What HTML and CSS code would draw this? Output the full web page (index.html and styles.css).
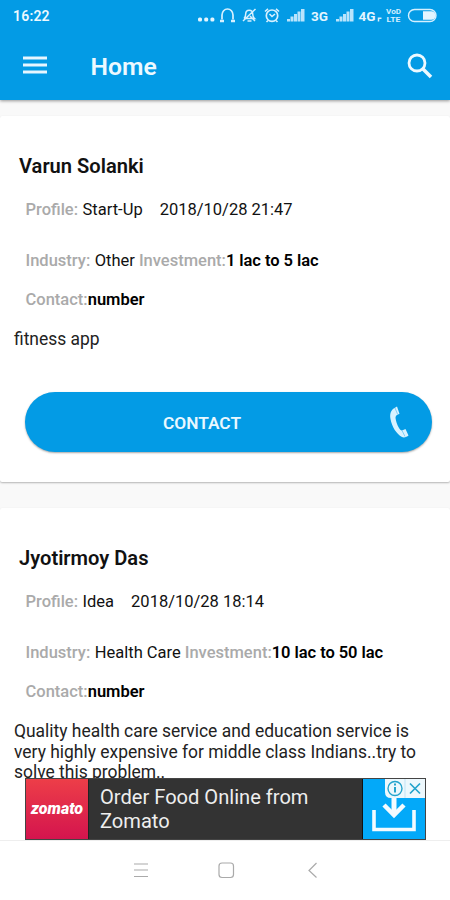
FILE: index.html
```html
<!DOCTYPE html>
<html lang="en">
<head>
<meta charset="utf-8">
<title>Home</title>
<link rel="stylesheet" href="styles.css">
</head>
<body>
<div class="screen">
  <header class="header">
    <div class="status">
      <span class="time">16:22</span>
      <svg class="status-icons" width="242" height="20" viewBox="0 0 242 20" fill="none" stroke="#d6f0ff" stroke-width="1.400">
        <g fill="#e3f5ff" stroke="none"><rect x="0" y="11.500" width="4" height="4" rx="1.500"/><rect x="6.200" y="11.500" width="4" height="4" rx="1.500"/><rect x="12.400" y="11.500" width="4" height="4" rx="1.500"/></g>
        <path d="M24 13.500V9a5.500 6 0 0 1 11 0v4.500" stroke-width="1.700"/><path d="M22 15h4M33 15h4" stroke-width="2.600"/>
        <path d="M46 12.500h10.500c-1.800-1.500-1.800-2.500-1.800-4.500 0-5-7-5-7 0 0 2 0 3-1.700 4.500M57.500 3L45 15M49.500 15h4M52 10l5 5" stroke-width="1.500"/>
        <circle cx="74" cy="9.700" r="5.700" stroke-width="1.700"/><path d="M67 5.500l3-2.700M78 2.800l3 2.700M71.500 8l2.500 2.500 3-2.500M70 14.500l-1.500 1.500M78 14.500l1.500 1.500" stroke-width="1.600"/>
        <g fill="#b9e4fc" stroke="none"><path d="M89 15.500v-2.500h3v2.500zM92.500 15.500v-5h3v5zM96 15.500V8h3v7.500zM99.500 15.500V5.500h3v10zM103 15.500V3h3.500v12.500z"/><path d="M138 15.500v-2.500h3v2.500zM141.500 15.500v-5h3v5zM145 15.500V8h3v7.500zM148.500 15.500V5.500h3v10zM152 15.500V3h3.500v12.500z"/></g>
        <g class="status-text"><text x="113" y="15" textLength="17" lengthAdjust="spacingAndGlyphs">3G</text><text x="160.500" y="15" textLength="17" lengthAdjust="spacingAndGlyphs">4G</text></g>
        <path d="M180.500 15.500v-4M180.500 12.300h3" stroke-width="1.500"/>
        <g class="status-small"><text x="188" y="7.500" textLength="15" lengthAdjust="spacingAndGlyphs">VoD</text><text x="188.500" y="16" textLength="14" lengthAdjust="spacingAndGlyphs">LTE</text></g>
        <rect x="210.500" y="3.500" width="27.500" height="12" rx="6"/><path d="M225 5.200h8.300a4.200 4.200 0 0 1 0 8.600H225z" fill="#e3f5ff" stroke="none"/>
      </svg>
    </div>
    <div class="toolbar">
      <svg class="menu" width="24" height="18" viewBox="0 0 24 18" stroke="#e6f6ff" stroke-width="3"><path d="M0 2h24M0 9h24M0 16h24"/></svg>
      <h1 class="title">Home</h1>
      <svg class="search" width="26" height="26" viewBox="0 0 26 26" fill="none" stroke="#edf9ff"><circle cx="10" cy="10" r="8" stroke-width="2.800"/><path d="M15.500 15.500l8.500 8.500" stroke-width="3.600"/></svg>
    </div>
  </header>

  <main class="feed">
    <article class="card">
      <h2 class="name">Varun Solanki</h2>
      <p class="row profile"><span class="label">Profile:</span><span class="value">Start-Up</span><span class="date">2018/10/28 21:47</span></p>
      <p class="row industry"><span class="label">Industry:</span><span class="value">Other</span><span class="label invest">Investment:</span><b>1 lac to 5 lac</b></p>
      <p class="row contact-row"><span class="label">Contact:</span><b>number</b></p>
      <p class="desc">fitness app</p>
      <button class="contact">CONTACT
        <svg class="phone" width="20" height="32" viewBox="0 0 20 32"><path d="M5.500 2C2 4 .5 7.500 1.500 13c1.500 8 6 15 11.500 18 2 1 5 0 6.500-1.500l-3-6.500-3.500 1.500c-1 .2-2-.8-3-2.500-2-3.500-3-6.500-3.500-10 0-1.500.5-2.500 1.500-3l2.500-1.200L8 .5z" fill="#d8f2ff"/><path d="M6 2l2.700 6.500M13 24.500l3 6" stroke="#61bff0" stroke-width=".7"/></svg>
      </button>
    </article>
    <article class="card">
      <h2 class="name">Jyotirmoy Das</h2>
      <p class="row profile"><span class="label">Profile:</span><span class="value">Idea</span><span class="date">2018/10/28 18:14</span></p>
      <p class="row industry"><span class="label">Industry:</span><span class="value">Health Care</span><span class="label invest">Investment:</span><b>10 lac to 50 lac</b></p>
      <p class="row contact-row"><span class="label">Contact:</span><b>number</b></p>
      <p class="desc">Quality health care service and education service is<br>very highly expensive for middle class Indians..try to<br>solve this problem..</p>
    </article>
  </main>

  <aside class="ad">
    <div class="brand">zomato</div>
    <div class="ad-text">Order Food Online from<br>Zomato</div>
    <div class="download">
      <svg width="62" height="60" viewBox="0 0 62 60" fill="none" stroke="#f4fbff"><path d="M11 31v19.500h40V31" stroke-width="3.600"/><path d="M31 17v18" stroke-width="5"/><path d="M21 26l10 10 10-10" stroke-width="4.500"/><path d="M22 0h40v19H28q-6 0-6-6z" fill="#edf8fd" stroke="none"/><g stroke="#24a3cc" stroke-width="1.400"><circle cx="32" cy="9.500" r="7"/><path d="M32 8v5.500M32 4.500v2" stroke-width="2"/><path d="M47 4.500l10 10M57 4.500l-10 10" stroke-width="1.700"/></g><path d="M42 0v19" stroke="#c1e3f5" stroke-width="1"/></svg>
    </div>
  </aside>
  <nav class="nav">
    <svg width="450" height="60" viewBox="0 0 450 60" fill="none" stroke="#aaa" stroke-width="1.200"><path d="M134 23h14M134 29h14M134 35.500h14"/><rect x="219" y="22" width="14.500" height="14.500" rx="3"/><path d="M316.500 22l-7.500 7.500 7.500 7"/></svg>
  </nav>
</div>
</body>
</html>
```
FILE: styles.css
```css
* { box-sizing: border-box; }
body { margin: 0; font-family: Roboto, sans-serif; background: #fff; }
h1, h2, p { margin: 0; }
svg { display: block; flex: none; }
.screen { width: 450px; height: 900px; display: flex; flex-direction: column; overflow: hidden; position: relative; }
.header { height: 100px; flex: none; background: #039be5; box-shadow: 0 1px 3px rgba(0,0,0,.4); z-index: 1; color: #edf9ff; }
.status { height: 32px; display: flex; justify-content: space-between; padding: 6px 10px 0 13px; }
.time { font-size: 14px; line-height: 21px; font-weight: 600; letter-spacing: .2px; }
.status-text { font-size: 13px; font-weight: 700; fill: #e3f5ff; stroke: none; }
.status-small { font-size: 7px; font-weight: 700; fill: #d3efff; stroke: none; }
.toolbar { height: 68px; display: flex; align-items: center; padding: 0 17px 0 23px; }
.menu { margin-top: -2px; }
.title { margin-left: 43.5px; font-size: 24.7px; line-height: 30px; font-weight: 600; padding-top: 2px; }
.search { margin-left: auto; margin-top: -1px; }
.feed { flex: 1; min-height: 0; overflow: hidden; background: #f9f9f9; padding-top: 16px; display: flex; flex-direction: column; gap: 26px; }
.card { flex: none; background: #fff; border-radius: 2px; padding: 38px 14px 0; height: 366px; box-shadow: 0 1px 2px rgba(0,0,0,.28); color: #111; }
.name { padding-left: 5px; font-size: 20.1px; line-height: 24px; font-weight: 600; white-space: nowrap; }
.row { padding-left: 11.5px; font-size: 16.5px; line-height: 20px; display: flex; white-space: nowrap; }
.profile { margin-top: 22px; }
.industry { margin-top: 31px; }
.contact-row { margin-top: 19px; }
.label { color: #aaa; font-weight: 500; }
.value { margin-left: 4.5px; }
.date { margin-left: 17px; }
.invest { margin-left: 4px; }
.row b { font-weight: 600; color: #000; }
.industry b { letter-spacing: -.06px; }
.desc { margin-top: 19px; font-size: 17.45px; line-height: 20.7px; color: #222; white-space: nowrap; }
.contact { display: flex; align-items: center; justify-content: center; position: relative; width: 407px; height: 60px; margin: 42px 0 0 11px; padding: 2px 53px 0 0; border: 0; border-radius: 30px; background: #039be5; color: #e9f8ff; font: 600 17.3px/20px Roboto, sans-serif; box-shadow: 0 1px 2px rgba(0,0,0,.35); }
.phone { position: absolute; left: 364px; top: 14px; }
.ad { position: absolute; left: 25px; top: 778px; z-index: 2; width: 401px; height: 62px; display: flex; border: 1px solid #444; background: #333; }
.brand { width: 62px; background: linear-gradient(#ed3e48, #d4144e); color: #fff; font: italic 900 16px/60px Roboto, sans-serif; text-align: center; }
.ad-text { flex: 1; border-left: 1px solid #222; padding: 6px 0 0 11px; color: #eee; font-size: 20.1px; line-height: 24px; white-space: nowrap; }
.download { width: 63px; background: #03a9f9; border-left: 1px solid #111; }
.nav { flex: none; height: 60px; background: #fff; border-top: 1px solid #eee; }
```
